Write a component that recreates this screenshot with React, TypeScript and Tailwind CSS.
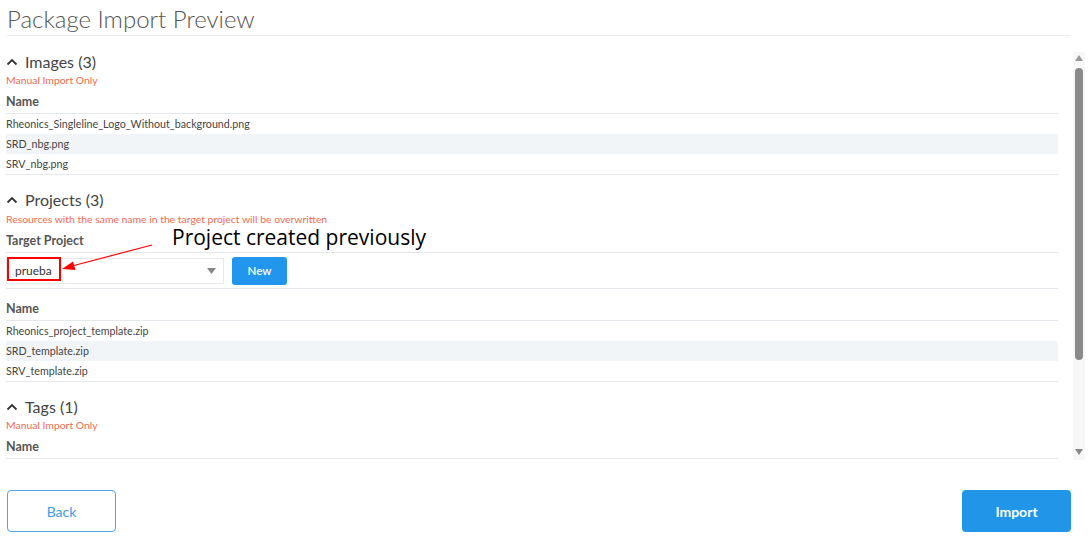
import React from "react";

const Chevron = () => (
  <svg width="12" height="10" viewBox="0 0 12 10" className="mr-[7px]">
    <path d="M1.5 7.5 L6 3 L10.5 7.5" fill="none" stroke="#333" strokeWidth="1.8" />
  </svg>
);

const SectionHeader = ({ title }: { title: string }) => (
  <div className="flex items-center h-[20px] text-[16px] text-[#444] leading-[20px]">
    <Chevron />
    <span>{title}</span>
  </div>
);

const Warn = ({ text }: { text: string }) => (
  <div className="h-[12px] leading-[12px] text-[10.4px] text-[#f26a50]">{text}</div>
);

const NameHeader = ({ label = "Name" }: { label?: string }) => (
  <div className="h-[23px] border-b border-[#e4e8ed] text-[12.5px] font-bold text-[#555] leading-[21px]">
    {label}
  </div>
);

const Rows = ({ items }: { items: string[] }) => (
  <div className="border-b border-[#e4e8ed]">
    {items.map((t, i) => (
      <div
        key={t}
        className={`h-[20px] leading-[20px] text-[10.7px] text-[#444] ${i % 2 === 1 ? "bg-[#f2f5f8]" : ""}`}
      >
        {t}
      </div>
    ))}
  </div>
);

export default function App() {
  return (
    <div className="relative w-[1091px] h-[556px] bg-white flex flex-col font-['Lato',sans-serif] overflow-hidden">
      <div className="ml-[7px] mr-[20px] h-[36px] border-b border-[#e8ecf0]">
        <div className="pt-[3px] leading-[32px] text-[24px] font-light text-[#555]">Package Import Preview</div>
      </div>

      <div className="flex h-[424px] pt-[16px]">
        <div className="pl-[6px] w-[1058px] flex flex-col">
          <SectionHeader title="Images (3)" />
          <div className="mt-[2px]"><Warn text="Manual Import Only" /></div>
          <div className="mt-[5px]"><NameHeader /></div>
          <Rows items={["Rheonics_Singleline_Logo_Without_background.png", "SRD_nbg.png", "SRV_nbg.png"]} />

          <div className="mt-[15px]"><SectionHeader title="Projects (3)" /></div>
          <div className="mt-[3px]"><Warn text="Resources with the same name in the target project will be overwritten" /></div>
          <div className="mt-[5px]"><NameHeader label="Target Project" /></div>
          <div className="h-[36px] border-b border-[#e4e8ed] flex items-center gap-[8px]">
            <div className="w-[218px] h-[26px] border border-[#e6e9ee] flex items-center justify-between pl-[8px] pr-[7px] text-[12px] text-[#333]">
              <span>prueba</span>
              <svg width="9" height="6" viewBox="0 0 9 6"><path d="M0 0 H9 L4.5 6 Z" fill="#888" /></svg>
            </div>
            <button className="w-[55px] h-[28px] rounded-[3px] bg-[#2196ec] text-white text-[11.5px] font-semibold">New</button>
          </div>
          <div className="mt-[9px]"><NameHeader /></div>
          <Rows items={["Rheonics_project_template.zip", "SRD_template.zip", "SRV_template.zip"]} />

          <div className="mt-[15px]"><SectionHeader title="Tags (1)" /></div>
          <div className="mt-[2px]"><Warn text="Manual Import Only" /></div>
          <div className="mt-[5px]"><NameHeader /></div>
        </div>

        <div className="ml-[15px] w-[12px] h-[408px] bg-[#f7f7f7] flex flex-col items-center">
          <svg width="8" height="6" viewBox="0 0 8 6" className="mt-[3px]"><path d="M0 6 L4 0 L8 6 Z" fill="#999" /></svg>
          <div className="mt-[7px] w-[8px] h-[292px] rounded-full bg-[#8a8a8a]" />
          <div className="flex-1" />
          <svg width="8" height="6" viewBox="0 0 8 6" className="mb-[5px]"><path d="M0 0 L8 0 L4 6 Z" fill="#888" /></svg>
        </div>
      </div>

      <div className="flex justify-between ml-[7px] mr-[20px] mt-[30px]">
        <button className="w-[109px] h-[42px] rounded-[4px] border border-[#4aa5ea] text-[#3d9be6] text-[14px]">Back</button>
        <button className="w-[109px] h-[42px] rounded-[4px] bg-[#2196e8] text-white text-[14px] font-bold">Import</button>
      </div>

      {/* Annotation overlay */}
      <div className="absolute left-[7px] top-[257px] w-[54px] h-[24px] border-2 border-[#ff0000]" />
      <svg className="absolute left-0 top-0" width="1091" height="556" style={{ pointerEvents: "none" }}>
        <line x1="152" y1="245" x2="72" y2="266" stroke="#ff0000" strokeWidth="1.2" />
        <path d="M62 269 L73 261.5 L75.5 270 Z" fill="#ff0000" />
      </svg>
      <div className="absolute left-[172px] top-[223px] text-[21px] leading-[28px] text-black font-['Open_Sans',sans-serif]">
        Project created previously
      </div>
    </div>
  );
}
